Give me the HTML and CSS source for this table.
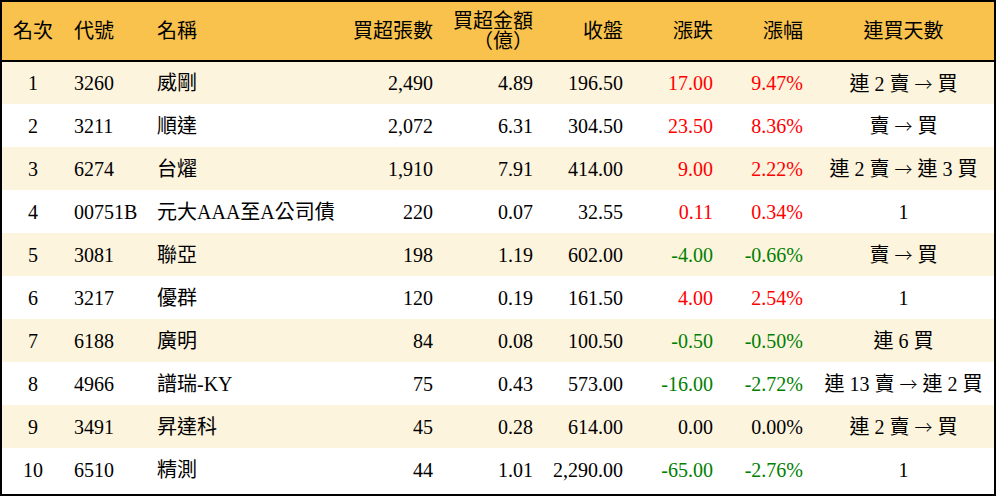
FILE: index.html
```html
<!DOCTYPE html>
<html lang="zh-Hant">
<head>
<meta charset="utf-8">
<title>買超排行</title>
<link rel="stylesheet" href="styles.css">
</head>
<body>
<div class="frame">
<table class="rank">
  <colgroup>
    <col class="c1"><col class="c2"><col class="c3"><col class="c4"><col class="c5"><col class="c6"><col class="c7"><col class="c8"><col class="c9">
  </colgroup>
  <thead>
    <tr>
      <th class="ctr">名次</th>
      <th class="lft">代號</th>
      <th class="lft">名稱</th>
      <th class="rgt">買超張數</th>
      <th class="rgt">買超金額<br>（億）</th>
      <th class="rgt">收盤</th>
      <th class="rgt">漲跌</th>
      <th class="rgt">漲幅</th>
      <th class="ctr">連買天數</th>
    </tr>
  </thead>
  <tbody>
    <tr class="alt"><td class="ctr">1</td><td class="lft">3260</td><td class="lft">威剛</td><td class="rgt">2,490</td><td class="rgt">4.89</td><td class="rgt">196.50</td><td class="rgt up">17.00</td><td class="rgt up">9.47%</td><td class="ctr">連 2 賣 <span class="arr">→</span> 買</td></tr>
    <tr><td class="ctr">2</td><td class="lft">3211</td><td class="lft">順達</td><td class="rgt">2,072</td><td class="rgt">6.31</td><td class="rgt">304.50</td><td class="rgt up">23.50</td><td class="rgt up">8.36%</td><td class="ctr">賣 <span class="arr">→</span> 買</td></tr>
    <tr class="alt"><td class="ctr">3</td><td class="lft">6274</td><td class="lft">台燿</td><td class="rgt">1,910</td><td class="rgt">7.91</td><td class="rgt">414.00</td><td class="rgt up">9.00</td><td class="rgt up">2.22%</td><td class="ctr">連 2 賣 <span class="arr">→</span> 連 3 買</td></tr>
    <tr><td class="ctr">4</td><td class="lft">00751B</td><td class="lft">元大AAA至A公司債</td><td class="rgt">220</td><td class="rgt">0.07</td><td class="rgt">32.55</td><td class="rgt up">0.11</td><td class="rgt up">0.34%</td><td class="ctr">1</td></tr>
    <tr class="alt"><td class="ctr">5</td><td class="lft">3081</td><td class="lft">聯亞</td><td class="rgt">198</td><td class="rgt">1.19</td><td class="rgt">602.00</td><td class="rgt down">-4.00</td><td class="rgt down">-0.66%</td><td class="ctr">賣 <span class="arr">→</span> 買</td></tr>
    <tr><td class="ctr">6</td><td class="lft">3217</td><td class="lft">優群</td><td class="rgt">120</td><td class="rgt">0.19</td><td class="rgt">161.50</td><td class="rgt up">4.00</td><td class="rgt up">2.54%</td><td class="ctr">1</td></tr>
    <tr class="alt"><td class="ctr">7</td><td class="lft">6188</td><td class="lft">廣明</td><td class="rgt">84</td><td class="rgt">0.08</td><td class="rgt">100.50</td><td class="rgt down">-0.50</td><td class="rgt down">-0.50%</td><td class="ctr">連 6 買</td></tr>
    <tr><td class="ctr">8</td><td class="lft">4966</td><td class="lft">譜瑞-KY</td><td class="rgt">75</td><td class="rgt">0.43</td><td class="rgt">573.00</td><td class="rgt down">-16.00</td><td class="rgt down">-2.72%</td><td class="ctr">連 13 賣 <span class="arr">→</span> 連 2 買</td></tr>
    <tr class="alt"><td class="ctr">9</td><td class="lft">3491</td><td class="lft">昇達科</td><td class="rgt">45</td><td class="rgt">0.28</td><td class="rgt">614.00</td><td class="rgt">0.00</td><td class="rgt">0.00%</td><td class="ctr">連 2 賣 <span class="arr">→</span> 買</td></tr>
    <tr><td class="ctr">10</td><td class="lft">6510</td><td class="lft">精測</td><td class="rgt">44</td><td class="rgt">1.01</td><td class="rgt">2,290.00</td><td class="rgt down">-65.00</td><td class="rgt down">-2.76%</td><td class="ctr">1</td></tr>
  </tbody>
</table>
</div>
</body>
</html>
```

FILE: styles.css
```css
html, body {
  margin: 0;
  padding: 0;
  background: #ffffff;
}
body {
  width: 996px;
  height: 496px;
  font-family: "Liberation Serif", "Noto Sans CJK TC", serif;
  font-size: 20px;
  color: #000;
}
.frame {
  width: 996px;
  height: 496px;
  box-sizing: border-box;
  border: 2px solid #000;
  background: #fff;
  overflow: hidden;
}
.rank {
  width: 992px;
  border-collapse: collapse;
  table-layout: fixed;
}
.c1 { width: 62px; }
.c2 { width: 83px; }
.c3 { width: 196px; }
.c4 { width: 100px; }
.c5 { width: 100px; }
.c6 { width: 90px; }
.c7 { width: 90px; }
.c8 { width: 90px; }
.c9 { width: 181px; }
.rank th {
  background: #f8c24d;
  height: 59px;
  padding: 0 10px;
  font-weight: normal;
  line-height: 20px;
  border-bottom: 2px solid #000;
  vertical-align: middle;
  box-sizing: border-box;
  white-space: nowrap;
}
.rank td {
  height: 43px;
  padding: 0 10px;
  line-height: 22px;
  vertical-align: middle;
  white-space: nowrap;
  box-sizing: border-box;
}
.rank tr.alt td {
  background: #fdf4de;
}
.arr {
  font-family: "Noto Sans CJK TC", sans-serif;
  font-weight: 300;
  font-size: 18px;
}
.ctr { text-align: center; }
.lft { text-align: left; }
.rgt { text-align: right; }
.up { color: #ff0000; }
.down { color: #008000; }
```
